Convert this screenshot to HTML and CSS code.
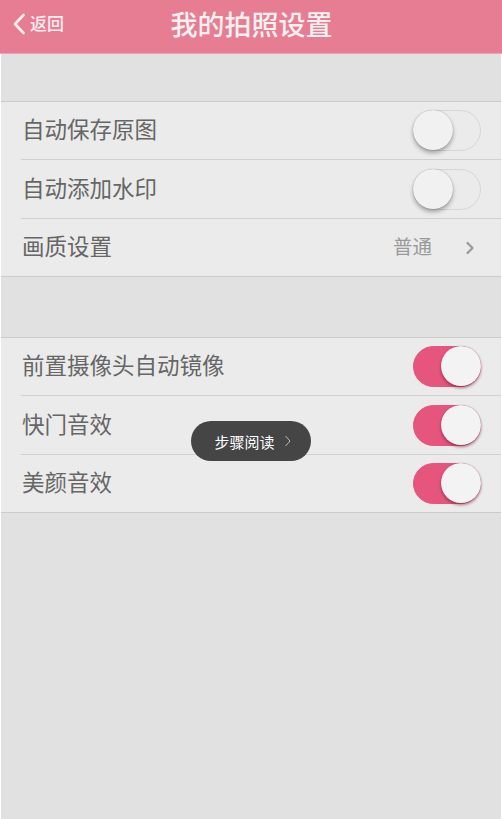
FILE: index.html
```html
<!DOCTYPE html>
<html lang="zh-CN">
    <head>
        <title>我的拍照设置</title>
        <meta charset="UTF-8">
        <meta name="viewport" content="width=device-width, initial-scale=1">
        <link rel="stylesheet" href="styles.css">
    </head>
    <body>
        <div class="page">
            <header class="topBar">
                <a class="back">
                    <svg width="14" height="22" viewBox="0 0 14 22"><path d="M11.5 2 L3 11 L11.5 20" fill="none" stroke="#f6eef0" stroke-width="2.6" stroke-linecap="round" stroke-linejoin="round"/></svg>
                    <span>返回</span>
                </a>
                <h1>我的拍照设置</h1>
            </header>
            <div class="content">
                <div class="group first">
                    <div class="row">
                        <span class="label">自动保存原图</span>
                        <i class="switch"></i>
                    </div>
                    <div class="row">
                        <span class="label">自动添加水印</span>
                        <i class="switch"></i>
                    </div>
                    <div class="row">
                        <span class="label">画质设置</span>
                        <span class="value">普通</span>
                        <svg class="arrow" width="10" height="16" viewBox="0 0 10 16"><path d="M2.5 3 L7.5 8 L2.5 13" fill="none" stroke="#999" stroke-width="2.2" stroke-linecap="round" stroke-linejoin="round"/></svg>
                    </div>
                </div>
                <div class="group">
                    <div class="row">
                        <span class="label">前置摄像头自动镜像</span>
                        <i class="switch on"></i>
                    </div>
                    <div class="row">
                        <span class="label">快门音效</span>
                        <i class="switch on"></i>
                    </div>
                    <div class="row">
                        <span class="label">美颜音效</span>
                        <i class="switch on"></i>
                    </div>
                </div>
            </div>
            <div class="tip">
                步骤阅读
                <svg width="8" height="12" viewBox="0 0 8 12"><path d="M1.5 1 L6 6 L1.5 11" fill="none" stroke="#bbb" stroke-width="1"/></svg>
            </div>
        </div>
    </body>
</html>
```

FILE: styles.css
```css
*{
    margin: 0;
    padding: 0;
    box-sizing: border-box;
}
body{
    background: #fff;
    font-family: "Noto Sans CJK SC", "Noto Sans", sans-serif;
}
.page{
    width: 502px;
    height: 819px;
    position: relative;
    overflow: hidden;
}
.topBar{
    height: 54px;
    background: #e77d93;
    border-bottom: 1px solid #eea3b3;
    display: flex;
    align-items: center;
    justify-content: center;
    position: relative;
}
.topBar h1{
    font-size: 27px;
    font-weight: 500;
    color: #f7f1f2;
    margin-left: 1px;
    margin-top: -6px;
}
.topBar .back{
    position: absolute;
    left: 12px;
    top: 12px;
    display: flex;
    align-items: center;
    color: #f6eef0;
    font-size: 17px;
    font-weight: 500;
}
.topBar .back span{
    margin-left: 4px;
    margin-top: -2px;
}
.content{
    height: 765px;
    background: #e1e1e1;
    margin: 0 1px;
    padding-top: 47px;
}
.group{
    background: #ebebeb;
    border-top: 1px solid #cbcbcb;
    border-bottom: 1px solid #cbcbcb;
    margin-bottom: 60px;
}
.row{
    height: 58px;
    margin-left: 20px;
    padding-right: 20px;
    border-bottom: 1px solid #d0d0d0;
    display: flex;
    align-items: center;
}
.row:nth-child(2){
    height: 59px;
}
.row:last-child{
    height: 57px;
    border-bottom: none;
}
.label{
    flex: 1;
    font-size: 22.5px;
    color: #666;
    padding-left: 1px;
    margin-top: -5px;
}
.value{
    font-size: 19.5px;
    color: #9a9a9a;
    margin-right: 33px;
    margin-top: -4px;
}
.arrow{
    margin-right: 6px;
}
.switch{
    display: block;
    width: 68px;
    height: 41px;
    border-radius: 21px;
    border: 1.5px solid #d6d6d6;
    background: #ebebeb;
    position: relative;
}
.switch::after{
    content: "";
    position: absolute;
    left: -1px;
    top: -1px;
    width: 40px;
    height: 40px;
    border-radius: 50%;
    background: #f1f1f1;
    box-shadow: 0 3px 4px rgba(0,0,0,0.3), 0 0 1px rgba(0,0,0,0.35);
}
.switch.on{
    background: #e5557d;
    border-color: #e5557d;
}
.switch.on::after{
    left: auto;
    right: -1px;
    background: #f3f3f3;
    box-shadow: 0 2px 3px rgba(120,20,50,0.55), 0 0 1px rgba(120,20,50,0.6);
}
.tip{
    position: absolute;
    left: 191px;
    top: 421px;
    width: 120px;
    height: 40px;
    border-radius: 20px;
    background: #454545;
    color: #fff;
    font-size: 15px;
    display: flex;
    align-items: center;
    justify-content: center;
    gap: 9px;
    padding-left: 4px;
}
```
